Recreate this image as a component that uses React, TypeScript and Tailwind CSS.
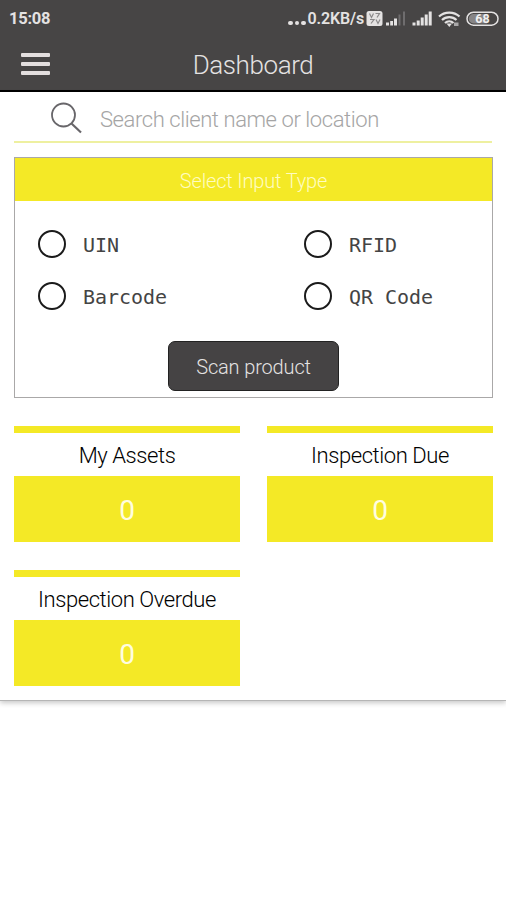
import React from "react";

const INPUT_TYPES = ["UIN", "RFID", "Barcode", "QR Code"];

const STATS = [
  { title: "My Assets", value: 0 },
  { title: "Inspection Due", value: 0 },
  { title: "Inspection Overdue", value: 0 },
];

const StatusIcons: React.FC = () => (
  <svg width="134" height="20" viewBox="0 0 134 20" fill="#e4e2e2">
    {/* VoLTE badge */}
    <rect x="0.5" y="2" width="16" height="15" rx="2.5" />
    <path d="M3.5 4.5l2 4 2-4M9.5 4.5h4l-2.500 4M4 10.500h4l-3 4M10 10.500l2 4 2-4" fill="none" stroke="#8b898a" strokeWidth="1.200" />
    {/* SIM 1 */}
    <path d="M20 13.500h3v3h-3zM24.200 12h2.800v4.500h-2.800zM28 9.500h3v7h-3z" />
    <path d="M32.500 5.500h2v11h-2zM37 2.500h2v14h-2z" fill="#6f6d6e" />
    {/* SIM 2 */}
    <path d="M46.500 13.500h3v3h-3zM50.700 11.500h3v5h-3zM54.700 8.500h3v8h-3zM58.700 5.500h3v11h-3zM62.700 2.500h3v14h-3z" />
    {/* wifi */}
    <g fill="none" stroke="#e4e2e2" strokeWidth="2.200">
      <path d="M73 7.500c5.500-5.300 15-5.300 20.500 0" />
      <path d="M76 11c4-3.800 10.500-3.800 14.500 0" />
      <path d="M79 14c2.500-2.300 6-2.300 8.500 0" />
    </g>
    <path d="M80.500 14.500h5.500l-2.700 3.500z" />
    <rect x="88" y="13.500" width="4.500" height="3.500" fill="#a9a7a8" />
    {/* battery */}
    <rect x="101" y="3.200" width="31" height="13" rx="6.500" fill="none" stroke="#e4e2e2" strokeWidth="1.500" />
    <path d="M107.500 5h13.500v9.500h-13.500a4.700 4.700 0 0 1 0-9.500z" fill="#878586" />
    <text x="116.500" y="14.300" textAnchor="middle" fontSize="12.500" fontWeight="700" fill="#f2f0f0">68</text>
  </svg>
);

const StatTile: React.FC<{ title: string; value: number }> = ({ title, value }) => (
  <div className="border-t-[7px] border-[#f4e926]">
    <div className="flex h-[43px] items-center justify-center pt-px text-[22px] font-light tracking-[-0.42px] text-black">
      <span className="whitespace-nowrap">{title}</span>
    </div>
    <div className="flex h-[66px] items-center justify-center bg-[#f4e926] pt-1 text-[28px] text-[#fffde0]">
      {value}
    </div>
  </div>
);

export default function App() {
  return (
    <div className="h-[900px] w-[506px] overflow-hidden bg-white font-['Roboto',sans-serif]">
      <header className="h-[92px] border-b-2 border-black bg-[#474545] text-[#e4e2e2]">
        <div className="flex h-[38px] items-center justify-between pl-[9px] pr-[6px]">
          <span className="text-[16.500px] font-bold tracking-[-0.25px]">15:08</span>
          <div className="flex items-center">
            <span className="mr-[2px] flex gap-[2px] pt-2">
              <i className="size-[4.500px] rounded-full bg-[#e4e2e2]" />
              <i className="size-[4.500px] rounded-full bg-[#e4e2e2]" />
              <i className="size-[4.500px] rounded-full bg-[#e4e2e2]" />
            </span>
            <span className="mr-0.5 text-[16px] font-semibold tracking-[-0.15px]">0.2KB/s</span>
            <StatusIcons />
          </div>
        </div>
        <div className="grid h-[52px] grid-cols-[60px_1fr_60px] items-center">
          <button className="ml-[21px] flex w-[29px] flex-col gap-[5px]" aria-label="Menu">
            <span className="h-[4px] w-full rounded-[1px] bg-[#e4dfdf]" />
            <span className="h-[4px] w-full rounded-[1px] bg-[#e4dfdf]" />
            <span className="h-[4px] w-full rounded-[1px] bg-[#e4dfdf]" />
          </button>
          <h1 className="pt-0.5 text-center text-[26px] font-light tracking-[-0.4px]">Dashboard</h1>
        </div>
      </header>

      <main className="h-[609px] border-b border-[#b5b5b5] px-[14px] shadow-[0_2px_5px_rgba(0,0,0,0.22)]">
        <div className="flex h-[51px] items-center border-b-2 border-[#eef0a0] pl-[36px] pt-1">
          <svg width="34" height="34" viewBox="0 0 34 34" fill="none" stroke="#68666a" className="mr-4">
            <circle cx="13.500" cy="13" r="11.500" strokeWidth="1.800" />
            <path d="M21.500 21.500l9.500 9" strokeWidth="2.200" />
          </svg>
          <span className="pt-0.5 text-[22px] font-light tracking-[-0.42px] text-[#a5a5a5]">Search client name or location</span>
        </div>

        <section className="mr-[-1px] mt-[14px] h-[241px] border border-[#aaa8a8]">
          <h2 className="flex h-[43px] items-center justify-center bg-[#f4e926] pt-[3px] text-[20px] font-light tracking-[-0.17px] text-[#fffcc0]">
            Select Input Type
          </h2>
          <div className="grid grid-cols-[266px_1fr] pl-[23px] pt-[17px]">
            {INPUT_TYPES.map((type) => (
              <label key={type} className="flex h-[52px] items-center">
                <span className="size-[28px] rounded-full border-[2.500px] border-[#1b1b1b]" />
                <span className="ml-[17px] pt-0.5 font-['DejaVu_Sans_Mono',monospace] text-[20px] tracking-[-0.05px] text-[#444]">{type}</span>
              </label>
            ))}
          </div>
          <button className="mx-auto mt-[19px] block h-[50px] w-[171px] rounded-[7px] border border-[#222] bg-[#454344] pt-0.5 text-[20px] font-light tracking-[-0.15px] text-[#e4e2e2]">
            Scan product
          </button>
        </section>

        <section className="mt-7 grid grid-cols-[226px_226px] gap-x-[27px] gap-y-[28px]">
          {STATS.map((stat) => (
            <StatTile key={stat.title} title={stat.title} value={stat.value} />
          ))}
        </section>
      </main>
    </div>
  );
}
